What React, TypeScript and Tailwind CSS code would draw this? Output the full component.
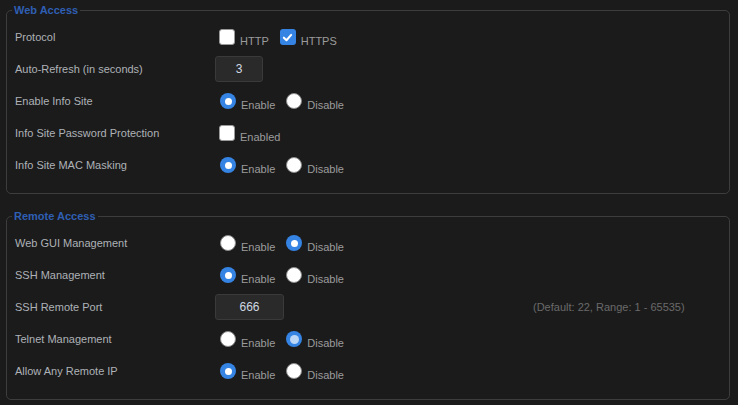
import type { ReactNode } from 'react';

type Opt = { label: string; on?: boolean; focus?: boolean };

function Radio({ on, focus }: { on?: boolean; focus?: boolean }) {
  if (on) {
    return (
      <span className="flex h-[16px] w-[16px] shrink-0 items-center justify-center rounded-full bg-[#3584e4]">
        <span
          className={
            focus
              ? 'h-[9px] w-[9px] rounded-full bg-[#bcd6f6]'
              : 'h-[7px] w-[7px] rounded-full bg-white'
          }
        />
      </span>
    );
  }
  return <span className="h-[16px] w-[16px] shrink-0 rounded-full border border-[#8a8a8a] bg-white" />;
}

function Check({ on }: { on?: boolean }) {
  if (on) {
    return (
      <span className="flex h-[16px] w-[16px] shrink-0 items-center justify-center rounded-[3px] bg-[#3584e4]">
        <svg width="11" height="11" viewBox="0 0 12 12" fill="none">
          <path d="M2 6.2 L4.9 9 L10 3.2" stroke="white" strokeWidth="2.2" strokeLinecap="round" strokeLinejoin="round" />
        </svg>
      </span>
    );
  }
  return <span className="h-[16px] w-[16px] shrink-0 rounded-[3px] border border-[#9a9a9a] bg-white" />;
}

function Options({ kind, opts }: { kind: 'radio' | 'check'; opts: Opt[] }) {
  return (
    <div className={`flex items-center gap-[11px] ${kind === 'radio' ? 'pl-[5px]' : 'pl-[4px]'}`}>
      {opts.map((o) => (
        <label key={o.label} className="flex items-center gap-[5px]">
          {kind === 'radio' ? <Radio on={o.on} focus={o.focus} /> : <Check on={o.on} />}
          <span className="mt-[8px] text-[11px] text-[#9b9b9b]">{o.label}</span>
        </label>
      ))}
    </div>
  );
}

function NumberBox({ value, width }: { value: string; width: string }) {
  return (
    <div
      className={`flex h-[26px] ${width} items-center justify-center rounded-[3px] border border-[#3a3a3a] bg-[#2a2a2a] text-[12px] text-[#cfd8e2]`}
    >
      {value}
    </div>
  );
}

function Row({ label, children, hint }: { label: string; children: ReactNode; hint?: string }) {
  return (
    <div className="flex h-[32px] items-center">
      <div className="w-[200px] shrink-0 text-[11px] text-[#aeb2b7]">{label}</div>
      <div className="w-[318px] shrink-0">{children}</div>
      {hint && <div className="text-[11px] text-[#6a6a6a]">{hint}</div>}
    </div>
  );
}

function Section({ title, children, className }: { title: string; children: ReactNode; className?: string }) {
  return (
    <fieldset className={`ml-[6px] mr-[8px] rounded-[5px] border border-[#3d3d3d] px-[8px] pt-[4px] pb-[12px] ${className ?? ''}`}>
      <legend className="-ml-[3px] px-[2px] text-[11px] leading-[14px] font-bold text-[#2f5fb4]">{title}</legend>
      {children}
    </fieldset>
  );
}

const enableDisable = (enabled: boolean, focus?: boolean): Opt[] => [
  { label: 'Enable', on: enabled },
  { label: 'Disable', on: !enabled, focus },
];

export default function App() {
  return (
    <div className="h-[405px] w-[738px] overflow-hidden bg-[#1b1b1b] pt-[3px] font-['Liberation_Sans',Arial,sans-serif]">
      <Section title="Web Access">
        <Row label="Protocol">
          <Options
            kind="check"
            opts={[
              { label: 'HTTP' },
              { label: 'HTTPS', on: true },
            ]}
          />
        </Row>
        <Row label="Auto-Refresh (in seconds)">
          <NumberBox value="3" width="w-[48px]" />
        </Row>
        <Row label="Enable Info Site">
          <Options kind="radio" opts={enableDisable(true)} />
        </Row>
        <Row label="Info Site Password Protection">
          <Options kind="check" opts={[{ label: 'Enabled' }]} />
        </Row>
        <Row label="Info Site MAC Masking">
          <Options kind="radio" opts={enableDisable(true)} />
        </Row>
      </Section>

      <Section title="Remote Access" className="mt-[15px]">
        <Row label="Web GUI Management">
          <Options kind="radio" opts={enableDisable(false)} />
        </Row>
        <Row label="SSH Management">
          <Options kind="radio" opts={enableDisable(true)} />
        </Row>
        <Row label="SSH Remote Port" hint="(Default: 22, Range: 1 - 65535)">
          <NumberBox value="666" width="w-[69px]" />
        </Row>
        <Row label="Telnet Management">
          <Options kind="radio" opts={enableDisable(false, true)} />
        </Row>
        <Row label="Allow Any Remote IP">
          <Options kind="radio" opts={enableDisable(true)} />
        </Row>
      </Section>
    </div>
  );
}
